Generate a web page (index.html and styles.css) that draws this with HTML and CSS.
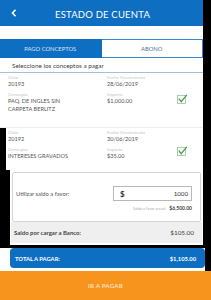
FILE: index.html
```html
<!DOCTYPE html>
<html lang="es">
<head>
<meta charset="utf-8">
<title>Estado de cuenta</title>
<link rel="stylesheet" href="styles.css">
</head>
<body>
<div class="top">
  <div class="header">
    <svg class="back" width="6" height="8" viewBox="0 0 6 8"><polyline points="4.5,0.8 1.5,4 4.5,7.2" fill="none" stroke="#fff" stroke-width="1.6"/></svg>
    <div class="title">ESTADO DE CUENTA</div>
  </div>
  <div class="tabs">
    <div class="tab active">PAGO CONCEPTOS</div>
    <div class="tab">ABONO</div>
  </div>
  <div class="hint">Seleccione los conceptos a pagar</div>
  <div class="item item1">
    <div class="col">
      <div class="lbl">Ciclo</div>
      <div class="val">20193</div>
      <div class="lbl">Concepto</div>
      <div class="val">PAQ. DE INGLES SIN<br>CARPETA BERLITZ</div>
    </div>
    <div class="col col2">
      <div class="lbl">Fecha Vencimiento</div>
      <div class="val">28/06/2019</div>
      <div class="lbl">Importe</div>
      <div class="val">$1,000.00</div>
    </div>
    <svg class="check" width="11" height="10" viewBox="0 0 11 10"><rect x="0.5" y="1.5" width="8" height="8" fill="none" stroke="#9cbf9c" stroke-width="0.8"/><polyline points="1.8,4.6 4.2,7.6 9.8,0.8" fill="none" stroke="#3fa344" stroke-width="1.3"/></svg>
  </div>
</div>
<div class="item item2">
  <div class="col">
    <div class="lbl">Ciclo</div>
    <div class="val">20192</div>
    <div class="lbl">Concepto</div>
    <div class="val">INTERESES GRAVADOS</div>
  </div>
  <div class="col col2">
    <div class="lbl">Fecha Vencimiento</div>
    <div class="val">30/06/2019</div>
    <div class="lbl">Importe</div>
    <div class="val">$35.00</div>
  </div>
  <svg class="check" width="11" height="10" viewBox="0 0 11 10"><rect x="0.5" y="1.5" width="8" height="8" fill="none" stroke="#9cbf9c" stroke-width="0.8"/><polyline points="1.8,4.6 4.2,7.6 9.8,0.8" fill="none" stroke="#3fa344" stroke-width="1.3"/></svg>
</div>
<div class="saldo-section">
  <div class="card">
    <div class="card-row">
      <span class="card-label">Utilizar saldo a favor:</span>
      <div class="input"><span class="dollar">$</span><span class="amount">1000</span></div>
    </div>
    <div class="actual"><span>Saldo a favor actual</span><b>$6,500.00</b></div>
  </div>
  <div class="banco"><span>Saldo por cargar a Banco:</span><span class="banco-val">$105.00</span></div>
</div>
<div class="total-wrap">
  <div class="total"><span>TOTAL A PAGAR:</span><span>$1,105.00</span></div>
</div>
<div class="pay">IR A PAGAR</div>
</body>
</html>
```
FILE: styles.css
```css
html, body {
  margin: 0;
  padding: 0;
}
body {
  width: 211px;
  height: 300px;
  overflow: hidden;
  background: #000;
  font-family: Lato, "Open Sans", sans-serif;
}
.top {
  width: 203px;
  background: #fff;
}
.header {
  height: 26px;
  background: #0e6ec1;
  display: flex;
  align-items: center;
  position: relative;
}
.back {
  margin-left: 11px;
}
.title {
  flex: 1;
  text-align: center;
  color: #fff;
  font-size: 9.5px;
  letter-spacing: 0.2px;
  padding-right: 15px;
  padding-top: 2px;
}
.tabs {
  margin-top: 13px;
  height: 19px;
  display: flex;
}
.tab {
  flex: 1;
  display: flex;
  align-items: center;
  justify-content: center;
  font-size: 5.8px;
  color: #4a6f95;
  box-sizing: border-box;
  border: 1px solid #3d88cc;
  border-left: none;
}
.tab.active {
  background: #0e6ec1;
  border-color: #0e6ec1;
  color: #d8e6f4;
}
.hint {
  height: 15px;
  box-sizing: border-box;
  border-bottom: 1px solid #a8c0d5;
  padding-left: 12px;
  display: flex;
  align-items: center;
  font-size: 6.4px;
  color: #444;
}
.item {
  display: flex;
  position: relative;
  background: #fff;
  box-sizing: border-box;
}
.item1 {
  height: 55px;
  padding: 0 0 0 8px;
  border-bottom: 1px solid #eee;
}
.item2 {
  margin-left: 6px;
  width: 197px;
  height: 42px;
  padding: 0 0 0 2px;
}
.col {
  width: 99px;
}
.col2 {
  width: 70px;
}
.lbl {
  font-size: 4.6px;
  color: #c4c4c4;
  line-height: 6px;
  margin-top: 0.5px;
}
.val {
  font-size: 5.6px;
  color: #555;
  line-height: 8px;
  margin-bottom: 3px;
}
.item1 .col { padding-top: 0.5px; }
.item2 .col { padding-top: 0.5px; }
.check {
  position: absolute;
  left: 177px;
  top: 21px;
}
.item2 .check {
  left: 171px;
  top: 18px;
}
.saldo-section {
  margin-left: 10px;
  width: 193px;
  height: 75px;
  background: #fff;
  padding: 2px 2px 0 2px;
  box-sizing: border-box;
}
.card {
  height: 50px;
  box-sizing: border-box;
  border: 1px solid #d4d4d4;
  border-radius: 2px;
  padding: 13px 8px 0 3px;
}
.card-row {
  display: flex;
  align-items: center;
  justify-content: space-between;
}
.card-label {
  font-size: 5.8px;
  color: #555;
}
.input {
  width: 79px;
  height: 15px;
  box-sizing: border-box;
  border: 1px solid #b8b8b8;
  display: flex;
  align-items: center;
  justify-content: space-between;
  padding: 0 3px 0 6px;
}
.dollar {
  font-size: 8px;
  font-weight: bold;
  color: #333;
}
.amount {
  font-size: 6.2px;
  color: #333;
}
.actual {
  margin-top: 4px;
  display: flex;
  justify-content: flex-end;
  align-items: baseline;
  gap: 4px;
  font-size: 3.8px;
  color: #aaa;
}
.actual b {
  font-size: 5px;
  color: #444;
  font-weight: bold;
}
.banco {
  height: 21px;
  background: #efefef;
  display: flex;
  align-items: center;
  justify-content: space-between;
  padding: 0 8px 0 3px;
  font-size: 6px;
  font-weight: bold;
  color: #444;
  margin: 0 -1px;
}
.banco-val {
  font-weight: normal;
  font-size: 6.4px;
}
.total-wrap {
  margin-top: 3px;
  width: 205px;
  height: 23px;
  background: #fff;
  padding: 0 0 0 10px;
  box-sizing: border-box;
}
.total {
  height: 20px;
  background: #0e6ec1;
  border-radius: 4px;
  display: flex;
  align-items: center;
  justify-content: space-between;
  padding: 0 9px 0 5px;
  color: #fff;
  font-size: 5.8px;
  font-weight: bold;
}
.pay {
  height: 29px;
  background: #f7941d;
  display: flex;
  align-items: center;
  justify-content: center;
  color: #fde0bd;
  font-size: 6.2px;
  font-weight: bold;
  letter-spacing: 0.2px;
}
```
